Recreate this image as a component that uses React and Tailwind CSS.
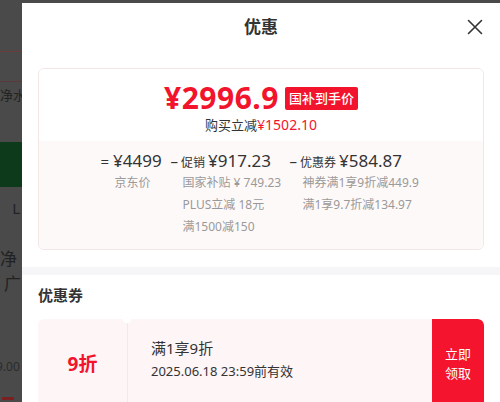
import React from 'react';

const RED = 'text-[#f2142c]';

function BackdropStrip() {
  // faint page content behind the overlay
  return (
    <div className="w-[22px] shrink-0 flex flex-col text-[#222] overflow-hidden">
      <div className="h-[51px] shrink-0" />
      <div className="h-px bg-[#6b3a3a] shrink-0" />
      <div className="h-[29px] shrink-0" />
      <div className="h-px bg-[#5a3a3a] shrink-0" />
      <div className="h-[28px] shrink-0 flex items-center text-[13px] whitespace-nowrap">净水</div>
      <div className="h-[32px] shrink-0" />
      <div className="h-[45px] shrink-0 bg-[#0e3a1c]" />
      <div className="h-[32px] shrink-0 flex items-end justify-end pr-[2px] text-[15px]">L</div>
      <div className="h-[52px] shrink-0 flex items-end text-[17px] whitespace-nowrap">净</div>
      <div className="h-[25px] shrink-0 flex items-end pl-[4px] text-[17px] whitespace-nowrap">广化</div>
      <div className="h-[80px] shrink-0 flex items-end text-[12px] text-[#2a2a2a] whitespace-nowrap -ml-[4px]">9.00</div>
      <div className="h-[24px] shrink-0 flex items-end"><div className="h-[3px] w-[12px] bg-[#7a2020] ml-[2px]" /></div>
    </div>
  );
}

export default function App() {
  return (
    <div
      className="w-[500px] h-[402px] flex bg-[#4a4a4a] overflow-hidden"
      style={{ fontFamily: '"Noto Sans", "Noto Sans CJK SC", sans-serif' }}
    >
      <BackdropStrip />
      <div className="flex-1 mt-[3px] bg-white flex flex-col">
        <header className="relative h-[46px] shrink-0 flex items-center justify-center">
          <span className="text-[17px] font-bold text-[#333] leading-none">优惠</span>
          <svg className="absolute right-[17px] top-[16px]" width="16" height="16" viewBox="0 0 16 16" fill="none" stroke="#333" strokeWidth="1.6" strokeLinecap="round">
            <path d="M1.5 1.5 L14.5 14.5 M14.5 1.5 L1.5 14.5" />
          </svg>
        </header>

        <div className="px-4 pt-[19px] pb-[17px]">
          <div className="border border-[#f3e6e6] rounded-[6px] overflow-hidden">
            <div className="h-[72px] bg-white flex flex-col items-center pt-[14px]">
              <div className="flex items-center gap-[6px]">
                <span className={`${RED} text-[30px] font-bold leading-none tracking-[0.5px]`}>¥2996.9</span>
                <span className="bg-[#f2142c] text-white text-[13px] font-medium leading-none px-[4px] py-[5px] rounded-[2px]">国补到手价</span>
              </div>
              <div className="mt-[5px] text-[13px] leading-none text-[#333] flex items-baseline">
                购买立减<span className={`${RED} text-[14px]`}>¥1502.10</span>
              </div>
            </div>
            <div className="h-[108px] bg-[#fef9f9] flex justify-center pl-[18px] pt-[11px] text-[#999] text-[12px]">
              <div className="flex flex-col w-[70px]">
                <div className="text-[#333] leading-none flex items-baseline">
                  <span className="text-[15px] mr-[4px]">=</span>
                  <span className="text-[17px]">¥4499</span>
                </div>
                <div className="mt-[8px] pl-[14px] leading-none">京东价</div>
              </div>
              <div className="flex flex-col w-[119px]">
                <div className="text-[#333] leading-none flex items-baseline">
                  <span className="text-[15px] mr-[3px]">–</span>
                  <span className="text-[12px] mr-[3px]">促销</span>
                  <span className="text-[17px]">¥917.23</span>
                </div>
                <div className="pl-[12px] leading-none flex flex-col gap-[10px] mt-[8px] whitespace-nowrap">
                  <span>国家补贴 ¥ 749.23</span>
                  <span>PLUS立减 18元</span>
                  <span>满1500减150</span>
                </div>
              </div>
              <div className="flex flex-col w-[150px]">
                <div className="text-[#333] leading-none flex items-baseline">
                  <span className="text-[15px] mr-[3px]">–</span>
                  <span className="text-[12px] mr-[3px]">优惠券</span>
                  <span className="text-[17px]">¥584.87</span>
                </div>
                <div className="pl-[13px] leading-none flex flex-col gap-[10px] mt-[8px] whitespace-nowrap">
                  <span>神券满1享9折减449.9</span>
                  <span>满1享9.7折减134.97</span>
                </div>
              </div>
            </div>
          </div>
        </div>

        <div className="h-[8px] bg-[#f6f6f9] shrink-0" />

        <div className="px-4 pt-[13px]">
          <div className="text-[15px] font-bold text-[#333] leading-none">优惠券</div>
          <div className="mt-[16px] flex h-[90px] rounded-[6px] overflow-hidden bg-[#fef5f6]">
            <div className="w-[90px] flex items-center justify-center border-r border-[#f9e6e8] relative">
              <span className={`${RED} text-[19px] font-bold`}>9折</span>
              <span className="absolute -right-[4px] -top-[4px] w-[8px] h-[8px] rounded-full bg-white" />
            </div>
            <div className="flex-1 pl-[23px] pt-[22px] text-[#333]">
              <div className="text-[15px] leading-none">满1享9折</div>
              <div className="text-[13px] leading-none mt-[9px]">2025.06.18 23:59前有效</div>
            </div>
            <div className="w-[52px] bg-[#f5142d] text-white text-[13px] flex items-center justify-center text-center leading-[1.5] rounded-tr-[6px]">
              立即<br />领取
            </div>
          </div>
        </div>
      </div>
    </div>
  );
}
